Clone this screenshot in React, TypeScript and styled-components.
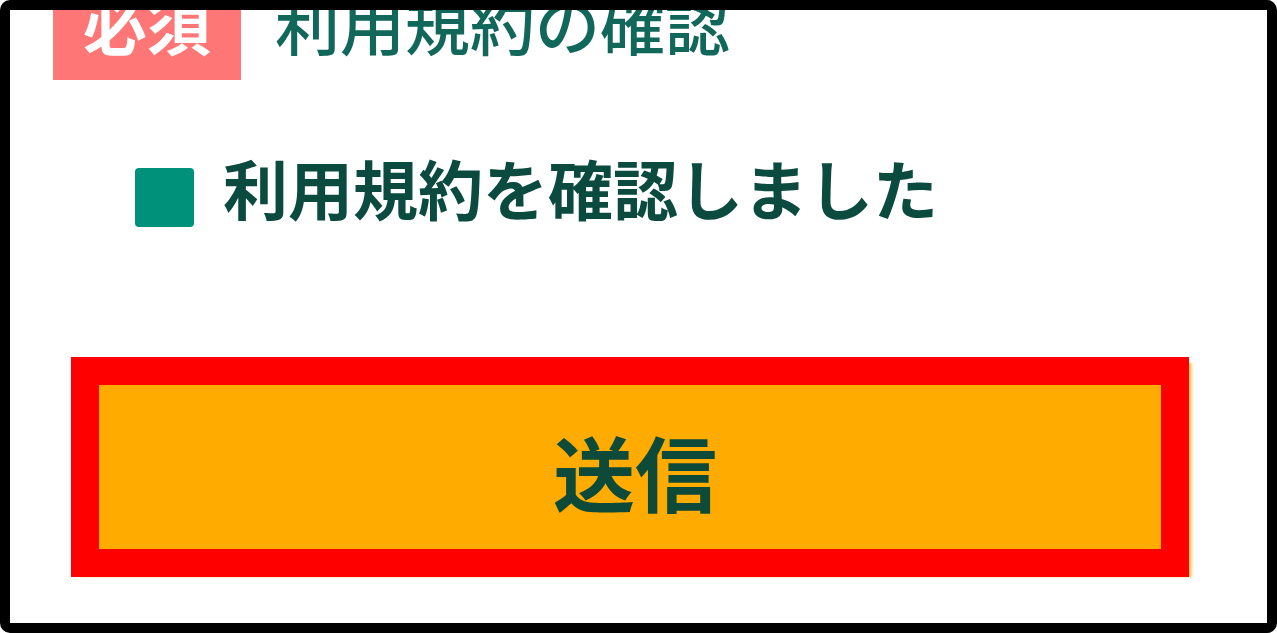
import styled, { createGlobalStyle } from "styled-components";

const GlobalStyle = createGlobalStyle`
	html, body {
		margin: 0;
		padding: 0;
		background: #ffffff;
	}
	body {
		font-family: "Noto Sans CJK JP", "Noto Sans", sans-serif;
	}
`;

export default function App() {
	return (
		<>
			<GlobalStyle />
			<Frame>
				<Content>
					<HeadingRow>
						<Badge>必須</Badge>
						<Heading>利用規約の確認</Heading>
					</HeadingRow>
					<CheckRow>
						<CheckBox aria-hidden="true" />
						<CheckLabel>利用規約を確認しました</CheckLabel>
					</CheckRow>
					<SubmitButton type="button">送信</SubmitButton>
				</Content>
			</Frame>
		</>
	);
}

const Frame = styled.div`
	width: 1277px;
	height: 633px;
	box-sizing: border-box;
	border: 10px solid #000000;
	border-radius: 10px;
	background: #ffffff;
	overflow: hidden;
`;

const Content = styled.div`
	display: flex;
	flex-direction: column;
	align-items: flex-start;
	padding-left: 43px;
`;

const HeadingRow = styled.div`
	display: flex;
	align-items: flex-start;
	gap: 34px;
	margin-top: -40px;
`;

const Badge = styled.span`
	display: block;
	padding: 20px 30px 26px;
	background: #ff7676;
	color: #ffffff;
	font-size: 64px;
	font-weight: 700;
	line-height: 1;
`;

const Heading = styled.h2`
	margin: 20px 0 0;
	color: #11675a;
	font-size: 65px;
	font-weight: 500;
	line-height: 1;
`;

const CheckRow = styled.label`
	display: flex;
	align-items: flex-start;
	gap: 29px;
	margin: 75px 0 0 82px;
`;

const CheckBox = styled.span`
	display: block;
	width: 59px;
	height: 59px;
	margin-top: 13px;
	border-radius: 4px;
	background: #00917a;
`;

const CheckLabel = styled.span`
	color: #0b4a3f;
	font-size: 65px;
	font-weight: 700;
	line-height: 1;
`;

const SubmitButton = styled.button`
	display: flex;
	align-items: center;
	justify-content: center;
	width: 1118px;
	height: 220px;
	box-sizing: border-box;
	margin: 130px 0 0 18px;
	padding: 8px 0 0 10px;
	border: 28px solid #ff0000;
	background: #ffab00;
	color: #0e4a3a;
	font-family: "Noto Sans CJK JP", "Noto Sans", sans-serif;
	font-size: 82px;
	font-weight: 700;
	line-height: 1;
	box-shadow: 6px 3px 2px -3px rgba(255, 171, 0, 0.6);
`;
